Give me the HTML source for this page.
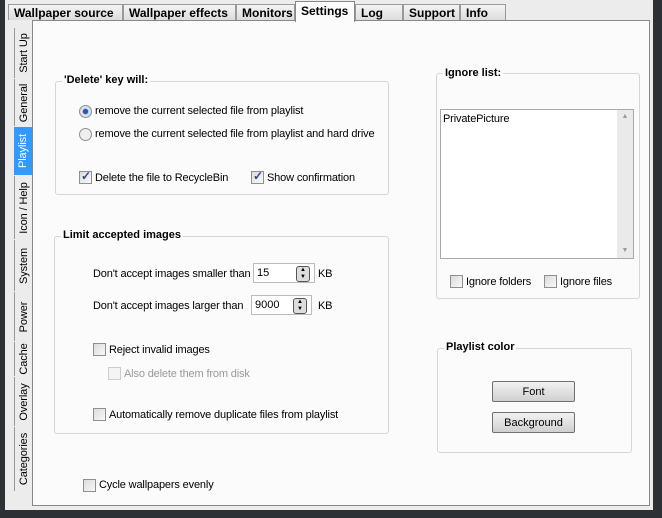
<html><head><style>
body{margin:0;width:662px;height:518px;background:#2d3035;position:relative;overflow:hidden;font-family:"Liberation Sans",sans-serif;font-size:12px;color:#000}
.a{position:absolute}
.win{left:5px;top:0;width:648px;height:510px;background:#ececec}
.tab{position:absolute;top:4px;height:16px;border:1px solid #999;border-bottom:none;background:linear-gradient(#f4f4f4,#dcdcdc);font-weight:bold;font-size:12px;line-height:16px;padding-left:5px;box-sizing:border-box}
.panel{left:32px;top:20px;width:618px;height:486px;background:#fbfbfb;border:1px solid #888;box-sizing:border-box}
.vt{position:absolute;left:14px;width:18px;border-left:1px solid #999;box-sizing:border-box}
.vt span{position:absolute;left:50%;top:50%;transform:translate(-50%,-50%) rotate(-90deg);white-space:nowrap;font-size:11px;letter-spacing:-0.1px}
.grp{position:absolute;border:1px solid #d6d6d6;border-radius:3px}
.lg{position:absolute;top:-8px;left:6px;background:#fbfbfb;font-weight:bold;padding:0 2px;font-size:11px}
.cb{position:absolute;width:11px;height:11px;border:1px solid #8e8f8f;background:linear-gradient(135deg,#dcdcdc,#f8f8f8)}
.cb.c::after{content:"✓";position:absolute;left:1px;top:-3px;font-size:12px;color:#2a4a8a;font-weight:bold}
.rb{position:absolute;width:11px;height:11px;border:1px solid #8e8f8f;border-radius:50%;background:#eee}
.t{position:absolute;white-space:nowrap;font-size:11px;letter-spacing:-0.15px;margin-top:1px}
.btn{position:absolute;width:83px;height:21px;border:1px solid #707070;border-radius:2px;background:linear-gradient(#f2f2f2,#d0d0d0);text-align:center;line-height:20px;box-sizing:border-box;font-size:11px}
.spin{position:absolute;height:20px;border:1px solid #bbb;background:#fff;box-sizing:border-box;padding-left:3px;line-height:18px;font-size:11px}
.sp{position:absolute;right:4px;top:2px;width:12px;height:14px;border:1px solid #555;border-radius:3px;background:#ddd;font-size:6px;line-height:7px;text-align:center}
</style></head><body>
<div class="a win"></div>
<div class="tab" style="left:8px;width:115px">Wallpaper source</div>
<div class="tab" style="left:123px;width:113px">Wallpaper effects</div>
<div class="tab" style="left:236px;width:59px">Monitors</div>
<div class="tab" style="left:355px;width:48px">Log</div>
<div class="tab" style="left:403px;width:57px">Support</div>
<div class="tab" style="left:460px;width:46px">Info</div>
<div class="a panel"></div>
<div class="tab" style="left:295px;top:1px;height:21px;width:60px;background:#fbfbfb;border-color:#888;line-height:18px">Settings</div>
<div class="vt" style="top:28px;height:50px"><span>Start Up</span></div>
<div class="vt" style="top:79px;height:47px"><span>General</span></div>
<div class="vt" style="top:127px;height:48px;background:#3399ff;color:#fff;border:none"><span>Playlist</span></div>
<div class="vt" style="top:176px;height:63px"><span>Icon / Help</span></div>
<div class="vt" style="top:240px;height:51px"><span>System</span></div>
<div class="vt" style="top:292px;height:49px"><span>Power</span></div>
<div class="vt" style="top:342px;height:34px"><span>Cache</span></div>
<div class="vt" style="top:377px;height:49px"><span>Overlay</span></div>
<div class="vt" style="top:427px;height:64px"><span>Categories</span></div>

<div class="grp" style="left:55px;top:81px;width:332px;height:112px"><div class="lg">'Delete' key will:</div></div>
<div class="rb" style="left:79px;top:105px;background:radial-gradient(#1c5fb0 30%,#dde 40%)"></div>
<div class="t" style="left:95px;top:104px">remove the current selected file from playlist</div>
<div class="rb" style="left:79px;top:128px"></div>
<div class="t" style="left:95px;top:127px">remove the current selected file from playlist and hard drive</div>
<div class="cb c" style="left:79px;top:171px"></div>
<div class="t" style="left:95px;top:171px">Delete the file to RecycleBin</div>
<div class="cb c" style="left:251px;top:171px"></div>
<div class="t" style="left:267px;top:171px">Show confirmation</div>

<div class="grp" style="left:54px;top:236px;width:333px;height:196px"><div class="lg">Limit accepted images</div></div>
<div class="t" style="left:93px;top:267px">Don't accept images smaller than</div>
<div class="spin" style="left:253px;top:263px;width:62px">15<div class="sp">▲<br>▼</div></div>
<div class="t" style="left:318px;top:267px">KB</div>
<div class="t" style="left:93px;top:299px">Don't accept images larger than</div>
<div class="spin" style="left:251px;top:295px;width:61px">9000<div class="sp">▲<br>▼</div></div>
<div class="t" style="left:318px;top:299px">KB</div>
<div class="cb" style="left:93px;top:343px"></div>
<div class="t" style="left:109px;top:343px">Reject invalid images</div>
<div class="cb" style="left:108px;top:367px;border-color:#ccc;background:#f4f4f4"></div>
<div class="t" style="left:124px;top:367px;color:#999">Also delete them from disk</div>
<div class="cb" style="left:93px;top:408px"></div>
<div class="t" style="left:109px;top:408px">Automatically remove duplicate files from playlist</div>
<div class="cb" style="left:83px;top:479px"></div>
<div class="t" style="left:99px;top:478px">Cycle wallpapers evenly</div>

<div class="grp" style="left:436px;top:73px;width:202px;height:224px"><div class="lg" style="top:-7px">Ignore list:</div></div>
<div class="a" style="left:440px;top:109px;width:194px;height:150px;border:1px solid #aaa;background:#fff;box-sizing:border-box"></div>
<div class="a" style="left:617px;top:110px;width:16px;height:148px;background:#eaeaea;color:#999;font-size:7px;text-align:center;line-height:14px">▲<div style="position:absolute;bottom:0;width:16px">▼</div></div>
<div class="t" style="left:443px;top:112px">PrivatePicture</div>
<div class="cb" style="left:450px;top:275px"></div>
<div class="t" style="left:466px;top:275px">Ignore folders</div>
<div class="cb" style="left:544px;top:275px"></div>
<div class="t" style="left:560px;top:275px">Ignore files</div>

<div class="grp" style="left:437px;top:348px;width:193px;height:103px"><div class="lg">Playlist color</div></div>
<div class="btn" style="left:492px;top:381px">Font</div>
<div class="btn" style="left:492px;top:412px">Background</div>
</body></html>
